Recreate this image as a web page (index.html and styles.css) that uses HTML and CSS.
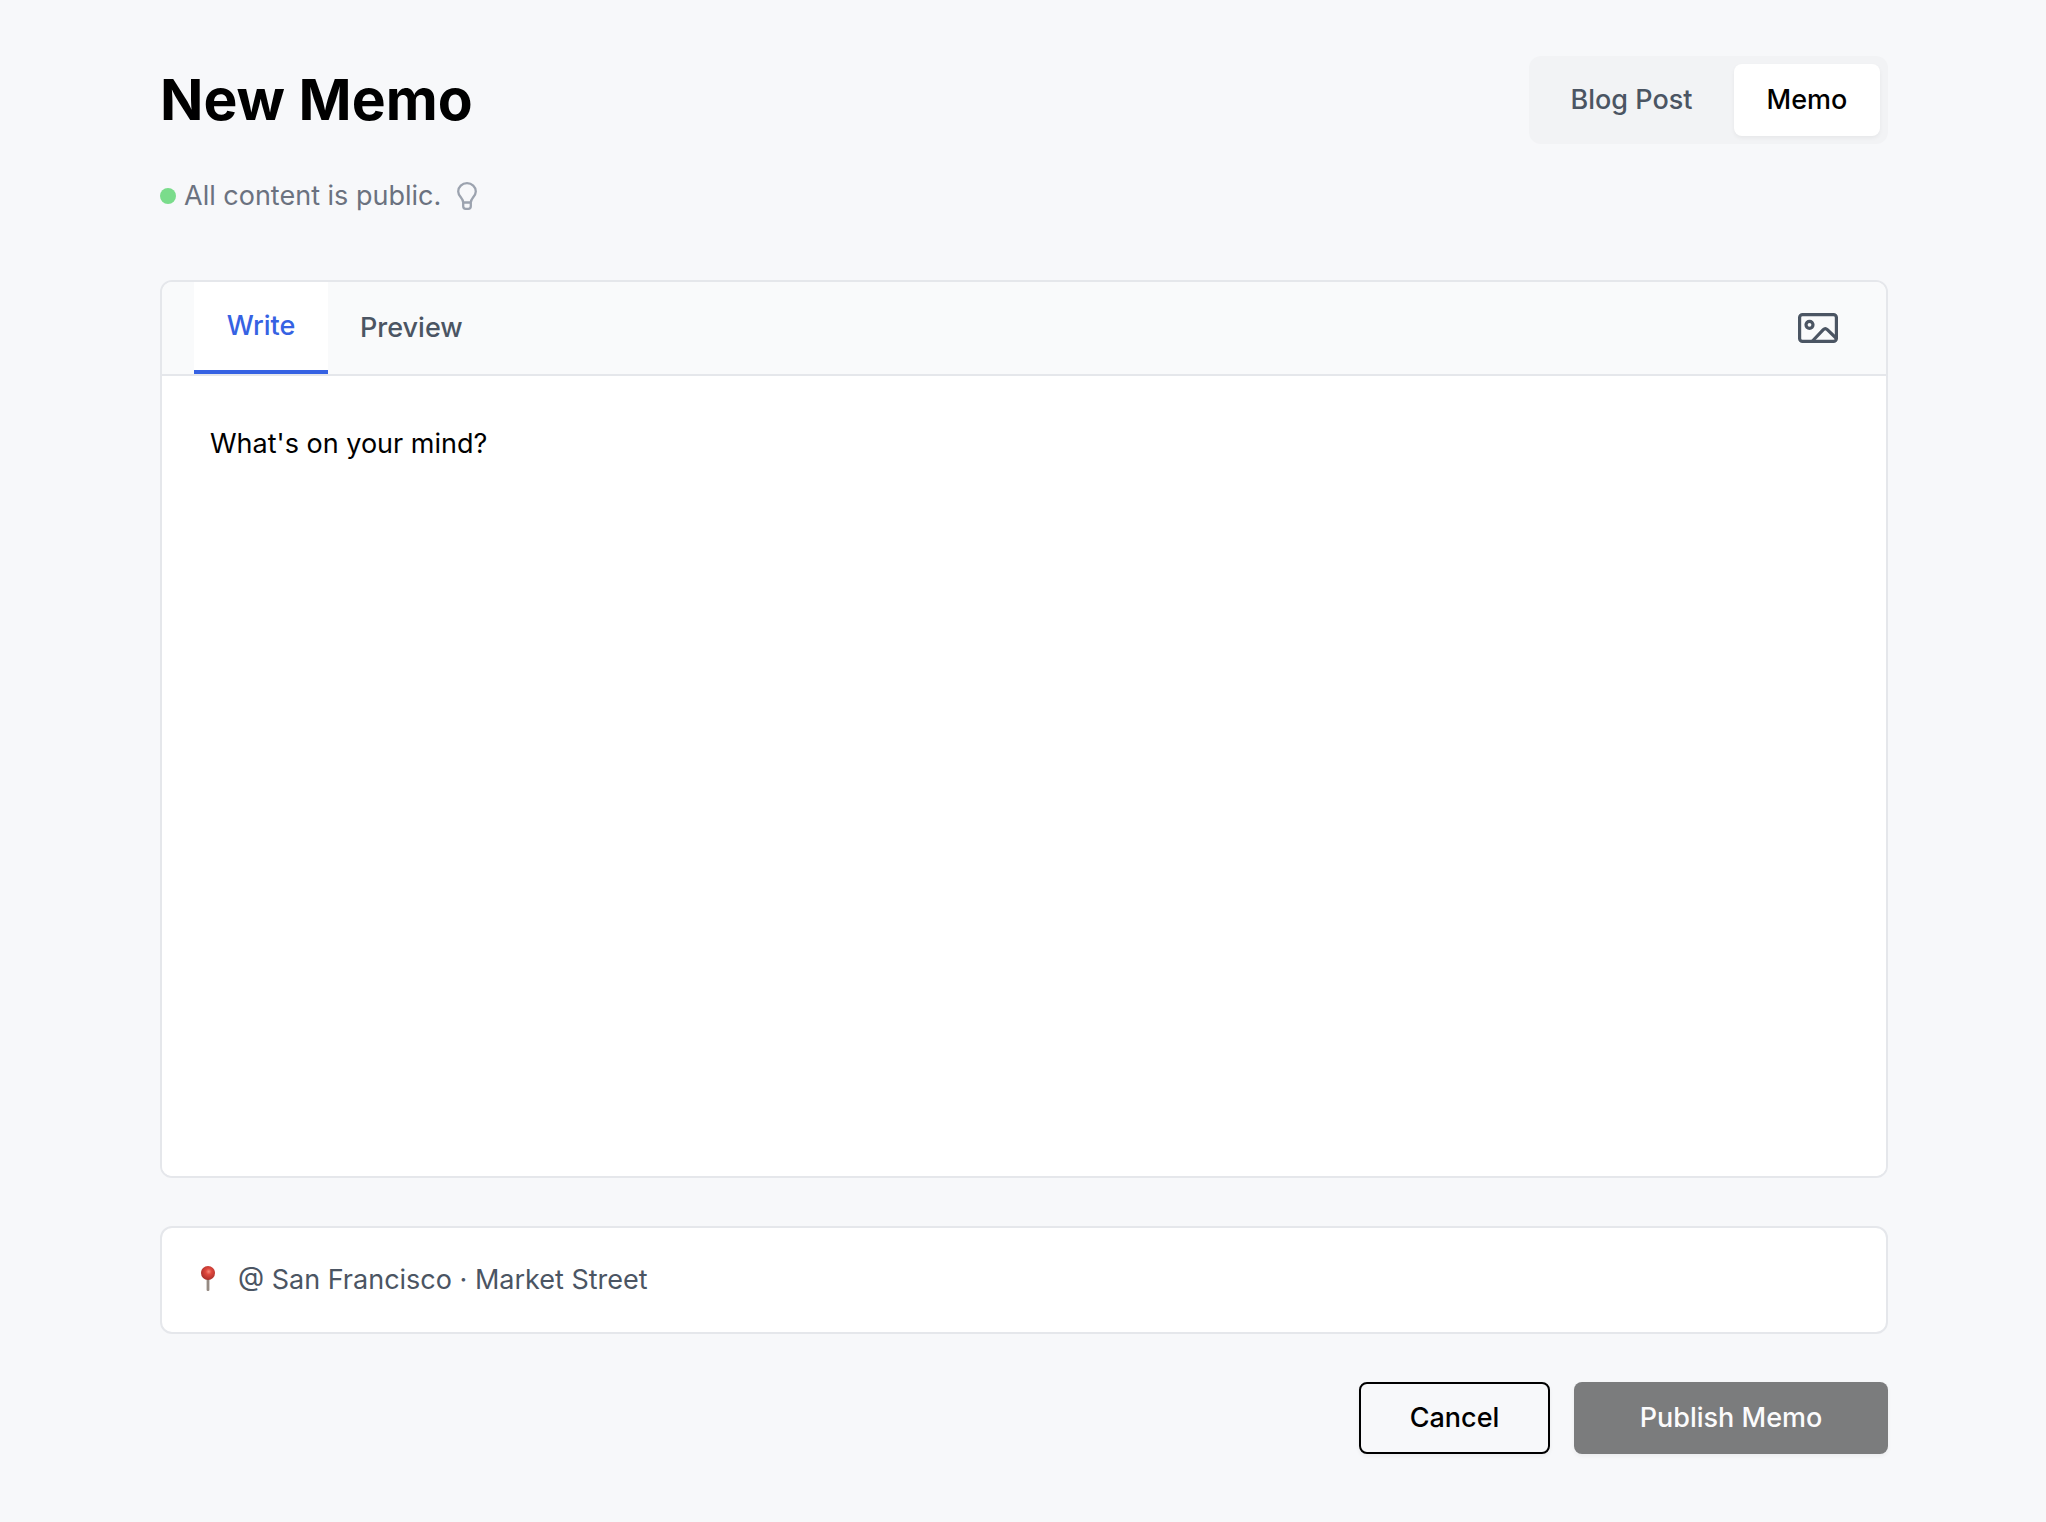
FILE: index.html
```html
<!DOCTYPE html>
<html lang="en">
<head>
  <meta charset="utf-8">
  <meta name="viewport" content="width=device-width, initial-scale=1">
  <title>New Memo</title>
  <link rel="stylesheet" href="styles.css">
</head>
<body>
  <main class="page">
    <header class="page-header">
      <h1 class="title">New Memo</h1>
      <div class="switch">
        <button type="button" class="switch-option switch-blog">Blog Post</button>
        <button type="button" class="switch-option is-active" aria-pressed="true">Memo</button>
      </div>
    </header>

    <p class="status">
      <span class="status-dot"></span>
      <span class="status-text">All content is public.</span>
      <svg class="bulb" viewBox="0 0 20 28" fill="none" stroke="currentColor" stroke-width="2.300" stroke-linejoin="round" aria-hidden="true">
        <path d="M6.200 20.500C6.200 16 1.200 14.500 1.200 9.500A8.800 8.300 0 0 1 18.800 9.500C18.800 14.500 13.800 16 13.800 20.500Z"/>
        <path d="M6.200 20.500v3.800Q6.200 26.800 8.700 26.800h2.600Q13.800 26.800 13.800 24.300V20.500"/>
      </svg>
    </p>

    <form class="form">
      <section class="editor">
        <div class="toolbar">
          <div class="tabs">
            <button type="button" class="tab is-active">Write</button>
            <button type="button" class="tab">Preview</button>
          </div>
          <button type="button" class="image-button" aria-label="Add image">
            <svg class="image-icon" viewBox="0 0 40 30" fill="none" stroke="currentColor" stroke-width="3.200" stroke-linejoin="round" aria-hidden="true">
              <rect x="1.600" y="1.600" width="36.800" height="26.800" rx="3"/>
              <circle cx="11.500" cy="11.800" r="3.500"/>
              <path d="M14.500 28 25.300 16.600Q27.300 14.600 29.300 16.600L38.500 25.500"/>
            </svg>
          </button>
        </div>
        <textarea class="memo-input" aria-label="Memo" placeholder="What's on your mind?"></textarea>
      </section>

      <label class="location">
        <svg class="pin" viewBox="0 0 14 28" aria-hidden="true">
          <defs>
            <radialGradient id="pin-head" cx="0.550" cy="0.400" r="0.600">
              <stop offset="0" stop-color="#f58a7c"/>
              <stop offset="0.350" stop-color="#e0483e"/>
              <stop offset="1" stop-color="#a92f2b"/>
            </radialGradient>
          </defs>
          <rect x="5.600" y="12" width="2.800" height="13" rx="1" fill="#968b83"/>
          <circle cx="7" cy="7" r="7" fill="url(#pin-head)"/>
        </svg>
        <input class="location-input" type="text" aria-label="Location" value="@ San Francisco · Market Street">
      </label>

      <div class="actions">
        <button type="button" class="button button-outline">Cancel</button>
        <button type="submit" class="button button-solid" disabled>Publish Memo</button>
      </div>
    </form>
  </main>
</body>
</html>
```
FILE: styles.css
```css
* {
  box-sizing: border-box;
}

body {
  margin: 0;
  background: #f7f8fa;
  color: #000;
  font-family: Inter, "Liberation Sans", sans-serif;
  font-size: 27px;
  line-height: 40px;
}

button,
input,
textarea {
  font: inherit;
}

button {
  border: 0;
  padding: 0;
  background: none;
  cursor: pointer;
}

svg {
  display: block;
  flex: none;
}

.page {
  padding: 56px 158px 64px 160px;
}

.page-header {
  display: flex;
  align-items: center;
  justify-content: space-between;
}

.title {
  margin: 0;
  font-size: 57px;
  font-weight: 700;
  line-height: 72px;
}

.switch {
  display: flex;
  gap: 8px;
  padding: 8px;
  border-radius: 12px;
  background: #f2f3f5;
}

.switch-option {
  min-width: 146px;
  padding: 16px 32px;
  border-radius: 8px;
  color: #4b5563;
  font-weight: 500;
}

.switch-blog {
  min-width: 189px;
}

.switch-option.is-active {
  background: #fff;
  color: #000;
  box-shadow: 0 2px 4px rgba(0, 0, 0, 0.05);
}

.status {
  display: flex;
  align-items: center;
  margin: 32px 0 64px;
  color: #6b7280;
}

.status-dot {
  width: 16px;
  height: 16px;
  border-radius: 50%;
  background: #7adc8b;
}

.status-text {
  margin: 0 16px 0 8px;
}

.bulb {
  width: 20px;
  height: 28px;
  color: #9ca3af;
}

.form {
  display: flex;
  flex-direction: column;
  gap: 48px;
}

.editor {
  overflow: hidden;
  border: 2px solid #e5e7eb;
  border-radius: 12px;
  background: #fff;
}

.toolbar {
  display: flex;
  align-items: stretch;
  justify-content: space-between;
  padding: 0 32px;
  border-bottom: 2px solid #e5e7eb;
  background: #f9fafb;
}

.tabs {
  display: flex;
}

.tab {
  min-width: 134px;
  padding: 24px 32px;
  color: #4b5563;
  font-weight: 500;
}

.tab.is-active {
  border-bottom: 4px solid #3662e3;
  background: #fff;
  color: #3662e3;
}

.image-button {
  padding: 0 16px;
  color: #4b5563;
}

.image-icon {
  width: 40px;
  height: 30px;
}

.memo-input {
  display: block;
  width: 100%;
  height: 800px;
  padding: 48px;
  border: 0;
  outline: 0;
  resize: none;
  background: #fff;
}

.memo-input::placeholder {
  color: #000;
  opacity: 1;
}

.location {
  display: flex;
  align-items: center;
  gap: 23px;
  padding: 32px 39px;
  border: 2px solid #e5e7eb;
  border-radius: 12px;
  background: #fff;
}

.pin {
  width: 14px;
  height: 28px;
}

.location-input {
  flex: 1;
  min-width: 0;
  height: 40px;
  padding: 0;
  border: 0;
  outline: 0;
  background: none;
  color: #4b5563;
}

.actions {
  display: flex;
  justify-content: flex-end;
  gap: 24px;
}

.button {
  height: 72px;
  border-radius: 8px;
  font-weight: 500;
  box-shadow: 0 2px 4px rgba(0, 0, 0, 0.05);
}

.button-outline {
  min-width: 191px;
  padding: 0 48px;
  border: 2px solid #000;
  color: #000;
}

.button-solid {
  min-width: 314px;
  padding: 0 64px;
  background: #7b7c7d;
  color: #fbfbfc;
}
```
